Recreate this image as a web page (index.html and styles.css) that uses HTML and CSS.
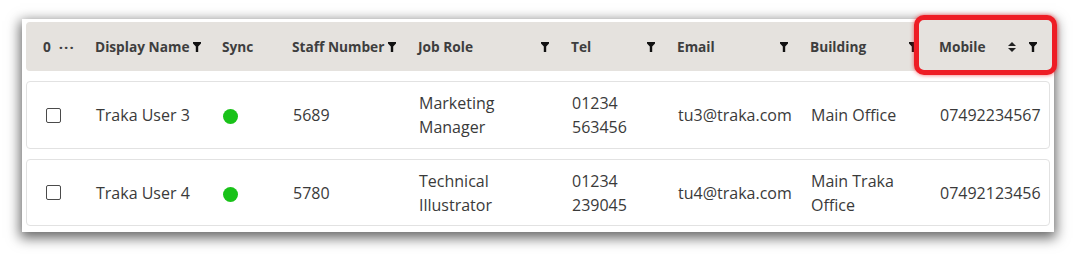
FILE: index.html
```html
<!DOCTYPE html>
<html>
<head>
<meta charset="utf-8">
<link rel="stylesheet" href="styles.css">
</head>
<body>
<div class="panel">
  <div class="head grid">
    <div class="hcell sel">0 <span class="dots">&middot;&middot;&middot;</span></div>
    <div class="hcell">Display Name <svg class="flt" viewBox="0 0 8 10"><path d="M0 0H8V1.6L5.2 4.6V10H2.8V4.6L0 1.6Z"/></svg></div>
    <div class="hcell">Sync</div>
    <div class="hcell">Staff Number <svg class="flt" viewBox="0 0 8 10"><path d="M0 0H8V1.6L5.2 4.6V10H2.8V4.6L0 1.6Z"/></svg></div>
    <div class="hcell spread">Job Role <svg class="flt" viewBox="0 0 8 10"><path d="M0 0H8V1.6L5.2 4.6V10H2.8V4.6L0 1.6Z"/></svg></div>
    <div class="hcell spread">Tel <svg class="flt" viewBox="0 0 8 10"><path d="M0 0H8V1.6L5.2 4.6V10H2.8V4.6L0 1.6Z"/></svg></div>
    <div class="hcell spread">Email <svg class="flt" viewBox="0 0 8 10"><path d="M0 0H8V1.6L5.2 4.6V10H2.8V4.6L0 1.6Z"/></svg></div>
    <div class="hcell spread">Building <svg class="flt" viewBox="0 0 8 10"><path d="M0 0H8V1.6L5.2 4.6V10H2.8V4.6L0 1.6Z"/></svg></div>
    <div class="hcell mob">Mobile <span class="icons"><svg class="sort" viewBox="0 0 8 10"><path d="M4 0L8 4H0Z M0 6H8L4 10Z"/></svg><svg class="flt" viewBox="0 0 8 10"><path d="M0 0H8V1.6L5.2 4.6V10H2.8V4.6L0 1.6Z"/></svg></span></div>
    <div class="highlight"></div>
  </div>

  <div class="row grid">
    <div class="cell"><span class="cb"></span></div>
    <div class="cell">Traka User 3</div>
    <div class="cell"><span class="dot"></span></div>
    <div class="cell">5689</div>
    <div class="cell">Marketing<br>Manager</div>
    <div class="cell">01234<br>563456</div>
    <div class="cell">tu3@traka.com</div>
    <div class="cell">Main Office</div>
    <div class="cell">07492234567</div>
  </div>

  <div class="row grid">
    <div class="cell"><span class="cb"></span></div>
    <div class="cell">Traka User 4</div>
    <div class="cell"><span class="dot"></span></div>
    <div class="cell">5780</div>
    <div class="cell">Technical<br>Illustrator</div>
    <div class="cell">01234<br>239045</div>
    <div class="cell">tu4@traka.com</div>
    <div class="cell">Main Traka<br>Office</div>
    <div class="cell">07492123456</div>
  </div>
</div>
</body>
</html>
```

FILE: styles.css
```css
html, body {
  margin: 0;
  padding: 0;
  background: #ffffff;
}

html {
  height: 100%;
}

body {
  min-height: 254px;
  box-sizing: border-box;
  padding: 19px 0 0 22px;
  font-family: "Open Sans", "Liberation Sans", sans-serif;
}

.panel {
  width: 1032px;
  height: 213px;
  box-sizing: border-box;
  padding: 3px 4px 5px 4px;
  background: #ffffff;
  box-shadow: 0 4px 12px 2px rgba(0, 0, 0, 0.6);
  display: flex;
  flex-direction: column;
  gap: 10px;
}

.grid {
  display: grid;
  grid-template-columns: 17px 52px 127px 70px 126px 153px 106px 133px 129px 1fr;
  align-items: center;
}

.head {
  position: relative;
  height: 49px;
  background: #e5e2de;
  border-radius: 4px;
  color: #3e3e3e;
  font-size: 13.7px;
  font-weight: 700;
}

.head::before,
.row::before {
  content: "";
}

.hcell {
  display: flex;
  align-items: center;
  gap: 4px;
  white-space: nowrap;
}

.hcell.spread {
  justify-content: space-between;
  padding-right: 22px;
}

.hcell.mob {
  justify-content: space-between;
  padding-right: 13px;
  position: relative;
  z-index: 2;
}

.sel .dots {
  letter-spacing: 1px;
  font-weight: 700;
  font-size: 15px;
  margin-left: 4px;
}

.flt {
  width: 8px;
  height: 10px;
  fill: #111;
  flex: none;
}

.sort {
  width: 8px;
  height: 10px;
  fill: #222;
  flex: none;
}

.icons {
  display: flex;
  gap: 13px;
  align-items: center;
}

.highlight {
  position: absolute;
  left: 888px;
  top: -7px;
  width: 143px;
  height: 60px;
  box-sizing: border-box;
  border: 5px solid #ee1c24;
  border-radius: 10px;
  background: #e5e2de;
  box-shadow: 0 0 4px rgba(238, 28, 36, 0.7);
  z-index: 1;
}

.row {
  background: #ffffff;
  border: 1px solid #e2e2e2;
  border-radius: 4px;
  color: #3a3a3a;
  font-size: 16px;
  line-height: 24px;
}

.row:nth-of-type(2) {
  height: 68px;
  box-sizing: border-box;
}

.row:nth-of-type(3) {
  height: 67px;
  box-sizing: border-box;
}

.cell {
  display: flex;
  align-items: center;
}

.cb {
  width: 15px;
  height: 15px;
  box-sizing: border-box;
  border: 1.5px solid #4a4a4a;
  border-radius: 2px;
  margin-left: 2px;
}

.dot {
  width: 15px;
  height: 15px;
  border-radius: 50%;
  background: #19c219;
  margin-top: 3px;
}
```
